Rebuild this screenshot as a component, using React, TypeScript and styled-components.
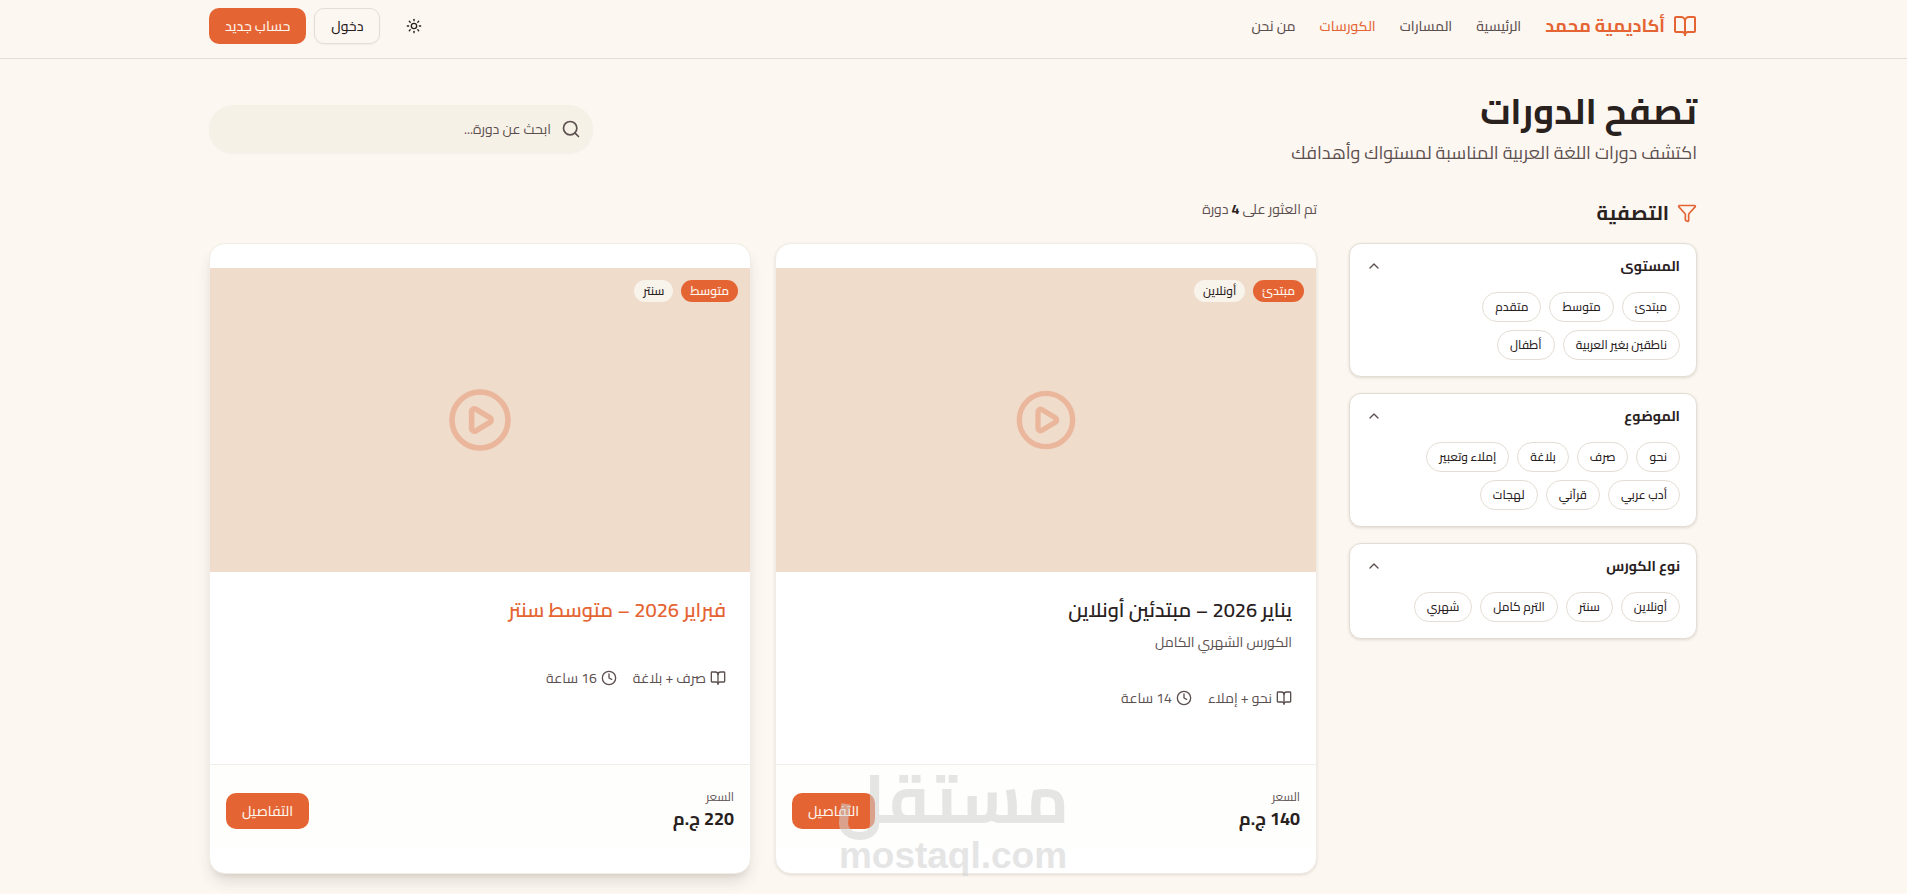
import React from 'react';
import styled, { createGlobalStyle, css } from 'styled-components';
import { BookOpen, ChevronUp, CirclePlay, Clock, Funnel, Search, Sun } from 'lucide-react';

const color = {
  page: '#fcf7f1',
  card: '#ffffff',
  ink: '#29211e',
  muted: '#5c4f4f',
  primary: '#e56433',
  onPrimary: '#fdf6ee',
  border: '#e3ddd3',
  softBorder: '#f1ede6',
  field: '#f6f1e7',
  media: '#efdccb',
  footer: '#fefefc',
};

const GlobalStyle = createGlobalStyle`
  *, *::before, *::after { box-sizing: border-box; }
  body {
    margin: 0;
    background: ${color.page};
    color: ${color.ink};
    font-family: Cairo, "Noto Sans Arabic", "DejaVu Sans", sans-serif;
    font-size: 14px;
    line-height: 20px;
  }
  h1, h2, h3, p { margin: 0; }
  button, input { font: inherit; color: inherit; }
  a { color: inherit; text-decoration: none; }
`;

const Page = styled.div`
  overflow: hidden;
`;

const Container = styled.div`
  max-width: 1537px;
  margin: 0 auto;
  padding: 0 25px 0 24px;
`;

const Header = styled.header`
  border-bottom: 1px solid ${color.border};
`;

const HeaderBar = styled(Container)`
  display: flex;
  align-items: center;
  justify-content: space-between;
  padding-top: 8px;
  padding-bottom: 14px;
`;

const HeaderGroup = styled.div<{ $gap: number }>`
  display: flex;
  align-items: center;
  gap: ${(p) => p.$gap}px;
`;

const Brand = styled.a`
  display: flex;
  align-items: center;
  gap: 8px;
  color: ${color.primary};
  font-size: 18px;
  line-height: 28px;
  font-weight: 700;
`;

const Nav = styled.nav`
  display: flex;
  gap: 24px;
`;

const NavLink = styled.a<{ $active?: boolean }>`
  color: ${(p) => (p.$active ? color.primary : color.muted)};
  font-weight: 500;
`;

const Button = styled.button<{ $variant: 'primary' | 'outline' | 'ghost' }>`
  display: inline-flex;
  align-items: center;
  justify-content: center;
  height: 36px;
  padding: 0 16px;
  border: 1px solid transparent;
  border-radius: 10px;
  background: transparent;
  font-weight: 500;
  cursor: pointer;
  ${(p) =>
    p.$variant === 'primary' &&
    css`
      border: 0;
      background: ${color.primary};
      color: ${color.onPrimary};
    `}
  ${(p) =>
    p.$variant === 'outline' &&
    css`
      border-color: ${color.border};
      box-shadow: 0 1px 2px rgba(60, 40, 20, 0.05);
    `}
  ${(p) =>
    p.$variant === 'ghost' &&
    css`
      width: 36px;
      padding: 0;
    `}
`;

const Intro = styled.section`
  display: flex;
  align-items: center;
  justify-content: space-between;
  gap: 24px;
  padding: 32px 0;
`;

const PageTitle = styled.h1`
  margin-bottom: 8px;
  font-size: 36px;
  line-height: 40px;
  font-weight: 700;
`;

const Lead = styled.p`
  color: ${color.muted};
  font-size: 18px;
  line-height: 28px;
`;

const SearchBox = styled.label`
  display: flex;
  align-items: center;
  gap: 10px;
  width: 384px;
  height: 48px;
  padding: 0 12px;
  border-radius: 24px;
  background: ${color.field};
  color: ${color.muted};
  box-shadow: 0 1px 2px rgba(60, 40, 20, 0.04);
`;

const SearchInput = styled.input`
  flex: 1;
  min-width: 0;
  padding: 0;
  border: 0;
  outline: 0;
  background: transparent;
  &::placeholder {
    color: ${color.muted};
    opacity: 1;
  }
`;

const Layout = styled.div`
  display: grid;
  grid-template-columns: repeat(4, minmax(0, 1fr));
  column-gap: 32px;
  align-items: start;
  padding-bottom: 48px;
`;

const Sidebar = styled.aside`
  display: flex;
  flex-direction: column;
  gap: 16px;
`;

const SidebarTitle = styled.h2`
  display: flex;
  align-items: center;
  gap: 8px;
  font-size: 20px;
  line-height: 28px;
  font-weight: 700;
  svg {
    color: ${color.primary};
  }
`;

const FilterCard = styled.section`
  padding: 12px 16px 16px;
  border: 1px solid ${color.border};
  border-radius: 12px;
  background: ${color.card};
  box-shadow: 0 1px 3px rgba(60, 40, 20, 0.14);
`;

const FilterToggle = styled.button`
  display: flex;
  align-items: center;
  justify-content: space-between;
  width: 100%;
  margin-bottom: 16px;
  padding: 0;
  border: 0;
  background: transparent;
  font-weight: 700;
  cursor: pointer;
  svg {
    color: ${color.muted};
  }
`;

const Chips = styled.div`
  display: flex;
  flex-wrap: wrap;
  gap: 8px;
`;

const Chip = styled.button`
  padding: 6px 12px;
  border: 1px solid ${color.border};
  border-radius: 15px;
  background: transparent;
  font-size: 12px;
  line-height: 16px;
  font-weight: 500;
  cursor: pointer;
`;

const Results = styled.main`
  grid-column: span 3;
`;

const Count = styled.p`
  margin-bottom: 24px;
  color: ${color.muted};
  strong {
    color: ${color.ink};
  }
`;

const CardGrid = styled.div`
  display: grid;
  grid-template-columns: repeat(2, minmax(0, 1fr));
  gap: 24px;
`;

const Card = styled.article<{ $raised?: boolean }>`
  display: flex;
  flex-direction: column;
  padding: 24px 0;
  border: 1px solid ${color.softBorder};
  border-radius: 16px;
  background: ${color.card};
  box-shadow: ${(p) =>
    p.$raised
      ? '0 10px 15px -3px rgba(60, 50, 30, 0.14), 0 4px 6px -4px rgba(60, 50, 30, 0.14)'
      : '0 1px 3px rgba(60, 40, 20, 0.14)'};
`;

const Media = styled.div<{ $raised?: boolean }>`
  position: relative;
  display: flex;
  align-items: center;
  justify-content: center;
  aspect-ratio: 16 / 9;
  background: ${color.media};
  > svg {
    color: ${color.primary};
    opacity: 0.3;
    transform: scale(${(p) => (p.$raised ? 1.05 : 1)});
  }
`;

const Badges = styled.div`
  position: absolute;
  top: 12px;
  right: 12px;
  display: flex;
  gap: 8px;
`;

const Badge = styled.span<{ $solid?: boolean }>`
  padding: 3px 9px;
  border-radius: 11px;
  background: ${(p) => (p.$solid ? color.primary : '#f8f3eb')};
  color: ${(p) => (p.$solid ? color.onPrimary : color.ink)};
  font-size: 12px;
  line-height: 16px;
  font-weight: ${(p) => (p.$solid ? 600 : 500)};
`;

const CardBody = styled.div`
  display: flex;
  flex: 1;
  flex-direction: column;
  padding: 24px 24px 56px;
`;

const CardTitle = styled.h3<{ $raised?: boolean }>`
  margin-bottom: 8px;
  color: ${(p) => (p.$raised ? color.primary : color.ink)};
  font-size: 20px;
  line-height: 28px;
  font-weight: 600;
`;

const Summary = styled.p`
  color: ${color.muted};
`;

const Meta = styled.div`
  display: flex;
  gap: 16px;
  margin-top: 36px;
  color: ${color.muted};
`;

const MetaItem = styled.span`
  display: flex;
  align-items: center;
  gap: 4px;
`;

const CardFooter = styled.div`
  display: flex;
  align-items: center;
  justify-content: space-between;
  padding: 24px 16px 16px;
  border-top: 1px solid ${color.softBorder};
  background: ${color.footer};
`;

const PriceLabel = styled.p`
  color: ${color.muted};
  font-size: 12px;
  line-height: 16px;
`;

const Price = styled.p`
  font-size: 18px;
  line-height: 28px;
  font-weight: 700;
`;

const CardSlot = styled.div`
  position: relative;
  display: grid;
`;

const Watermark = styled.div`
  position: absolute;
  left: 62px;
  bottom: 0;
  width: 232px;
  color: #d2d2d2;
  opacity: 0.56;
  text-align: center;
  white-space: nowrap;
  pointer-events: none;
`;

const WatermarkArabic = styled.div`
  height: 76px;
  font-size: 68px;
  line-height: 72px;
  font-weight: 700;
`;

const WatermarkLatin = styled.div`
  font-family: "Liberation Sans", Arial, sans-serif;
  font-size: 37px;
  line-height: 36px;
  font-weight: 700;
`;

const filters = [
  { title: 'المستوى', options: ['مبتدئ', 'متوسط', 'متقدم', 'ناطقين بغير العربية', 'أطفال'] },
  { title: 'الموضوع', options: ['نحو', 'صرف', 'بلاغة', 'إملاء وتعبير', 'أدب عربي', 'قرآني', 'لهجات'] },
  { title: 'نوع الكورس', options: ['أونلاين', 'سنتر', 'الترم كامل', 'شهري'] },
];

const courses = [
  {
    title: 'يناير 2026 – مبتدئين أونلاين',
    summary: 'الكورس الشهري الكامل',
    level: 'مبتدئ',
    mode: 'أونلاين',
    topics: 'نحو + إملاء',
    hours: '14 ساعة',
    price: '140 ج.م',
    raised: false,
    watermark: true,
  },
  {
    title: 'فبراير 2026 – متوسط سنتر',
    summary: '',
    level: 'متوسط',
    mode: 'سنتر',
    topics: 'صرف + بلاغة',
    hours: '16 ساعة',
    price: '220 ج.م',
    raised: true,
    watermark: false,
  },
];

export default function App() {
  return (
    <Page dir="rtl" lang="ar">
      <GlobalStyle />
      <Header>
        <HeaderBar>
          <HeaderGroup $gap={24}>
            <Brand href="#">
              <BookOpen size={24} />
              أكاديمية محمد
            </Brand>
            <Nav>
              <NavLink href="#">الرئيسية</NavLink>
              <NavLink href="#">المسارات</NavLink>
              <NavLink href="#" $active>الكورسات</NavLink>
              <NavLink href="#">من نحن</NavLink>
            </Nav>
          </HeaderGroup>
          <HeaderGroup $gap={16}>
            <Button $variant="ghost" aria-label="المظهر">
              <Sun size={16} />
            </Button>
            <HeaderGroup $gap={8}>
              <Button $variant="outline">دخول</Button>
              <Button $variant="primary">حساب جديد</Button>
            </HeaderGroup>
          </HeaderGroup>
        </HeaderBar>
      </Header>

      <Container>
        <Intro>
          <div>
            <PageTitle>تصفح الدورات</PageTitle>
            <Lead>اكتشف دورات اللغة العربية المناسبة لمستواك وأهدافك</Lead>
          </div>
          <SearchBox>
            <Search size={20} />
            <SearchInput type="text" placeholder="ابحث عن دورة..." aria-label="ابحث عن دورة" />
          </SearchBox>
        </Intro>

        <Layout>
          <Sidebar>
            <SidebarTitle>
              <Funnel size={20} />
              التصفية
            </SidebarTitle>
            {filters.map((filter) => (
              <FilterCard key={filter.title}>
                <FilterToggle aria-expanded="true">
                  {filter.title}
                  <ChevronUp size={16} />
                </FilterToggle>
                <Chips>
                  {filter.options.map((option) => (
                    <Chip key={option}>{option}</Chip>
                  ))}
                </Chips>
              </FilterCard>
            ))}
          </Sidebar>

          <Results>
            <Count>
              تم العثور على <strong>4</strong> دورة
            </Count>
            <CardGrid>
              {courses.map((course) => (
                <CardSlot key={course.title}>
                  <Card $raised={course.raised}>
                    <Media $raised={course.raised}>
                      <CirclePlay size={64} />
                      <Badges>
                        <Badge $solid>{course.level}</Badge>
                        <Badge>{course.mode}</Badge>
                      </Badges>
                    </Media>
                    <CardBody>
                      <CardTitle $raised={course.raised}>{course.title}</CardTitle>
                      <Summary>{course.summary}</Summary>
                      <Meta>
                        <MetaItem>
                          <BookOpen size={16} />
                          {course.topics}
                        </MetaItem>
                        <MetaItem>
                          <Clock size={16} />
                          {course.hours}
                        </MetaItem>
                      </Meta>
                    </CardBody>
                    <CardFooter>
                      <div>
                        <PriceLabel>السعر</PriceLabel>
                        <Price>{course.price}</Price>
                      </div>
                      <Button $variant="primary">التفاصيل</Button>
                    </CardFooter>
                  </Card>
                  {course.watermark && (
                    <Watermark>
                      <WatermarkArabic>مستقل</WatermarkArabic>
                      <WatermarkLatin dir="ltr">mostaql.com</WatermarkLatin>
                    </Watermark>
                  )}
                </CardSlot>
              ))}
            </CardGrid>
          </Results>
        </Layout>
      </Container>
    </Page>
  );
}
